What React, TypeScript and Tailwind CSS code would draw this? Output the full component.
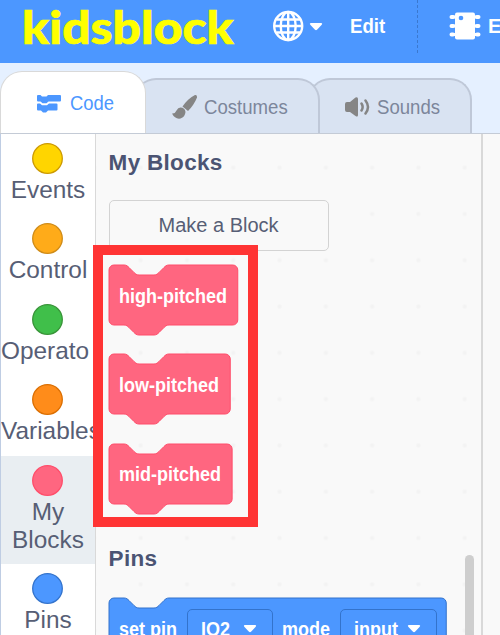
import type { ReactNode } from "react";

const categories = [
  { name: "Events", fill: "#ffd500", stroke: "#cc9900" },
  { name: "Control", fill: "#ffab19", stroke: "#cf8b17" },
  { name: "Operato", fill: "#40bf4a", stroke: "#389438", wide: true },
  { name: "Variables", fill: "#ff8c1a", stroke: "#db6e00" },
  { name: "My Blocks", fill: "#ff6680", stroke: "#ff4d6a", active: true },
  { name: "Pins", fill: "#4c97ff", stroke: "#3373cc" },
];

type CategoryProps = { name: string; fill: string; stroke: string; active?: boolean; wide?: boolean };

function Category({ name, fill, stroke, active, wide }: CategoryProps) {
  return (
    <div className={`flex flex-col items-center pt-[9px] pb-[10.6px] ${active ? "bg-[#e9eef2]" : ""}`}>
      <svg width="32" height="31" viewBox="0 0 32 31">
        <circle cx="15.500" cy="15.500" r="14.800" fill={fill} stroke={stroke} strokeWidth="1.300" />
      </svg>
      <div className={`mt-[2px] w-[94px] text-[24.4px] leading-[28px] text-[#575e75] ${wide ? "text-left" : "text-center"}`}>{name}</div>
    </div>
  );
}

function blockPath(w: number) {
  return `M0,4 A4,4 0 0,1 4,0 H12 c2,0 3,1 4,2 l4,4 c1,1 2,2 4,2 h12 c2,0 3,-1 4,-2 l4,-4 c1,-1 2,-2 4,-2 H${w - 4} a4,4 0 0,1 4,4 v40 a4,4 0 0,1 -4,4 H48 c-2,0 -3,1 -4,2 l-4,4 c-1,1 -2,2 -4,2 h-12 c-2,0 -3,-1 -4,-2 l-4,-4 c-1,-1 -2,-2 -4,-2 H4 a4,4 0 0,1 -4,-4 z`;
}

function Block({ units, fill, stroke, children }: { units: number; fill: string; stroke: string; children: ReactNode }) {
  return (
    <div className="relative h-[89.4px]" style={{ width: units * 1.25 }}>
      <svg className="absolute inset-0 overflow-visible" width={units * 1.25} height="71" viewBox={`0 0 ${units} 56.8`}>
        <path d={blockPath(units)} fill={fill} stroke={stroke} strokeWidth="0.8" />
      </svg>
      <div className="relative flex h-[61px] items-center pl-[10px] text-[20px] font-bold text-white">{children}</div>
    </div>
  );
}

function Label({ children }: { children: ReactNode }) {
  return <span className="inline-block origin-left scale-x-[0.9] whitespace-nowrap">{children}</span>;
}

function Caret() {
  return (
    <svg width="14" height="9" viewBox="0 0 14 9">
      <path d="M2 1H12Q14 1 12.5 3L8 7.8Q7 8.6 6 7.8L1.500 3Q0 1 2 1Z" fill="#fff" />
    </svg>
  );
}

function Dropdown({ label, className }: { label: string; className: string }) {
  return (
    <div className={`flex h-[40px] shrink-0 items-center justify-between rounded-[5px] border border-[#3373cc] ${className}`}>
      <Label>{label}</Label>
      <Caret />
    </div>
  );
}

export default function App() {
  return (
    <div className="flex h-[635px] w-[500px] flex-col overflow-hidden bg-[#e5f0ff] font-['Liberation_Sans',Arial,sans-serif]">
      <header className="flex h-[63px] shrink-0 items-start overflow-hidden bg-[#4c97ff]">
        <div className="h-full w-[273px] shrink-0 pl-[21.5px] font-[Lato,sans-serif] text-[46px] leading-[54px] font-black text-[#ffff00]">
          <span className="inline-block origin-left scale-x-[1.083] [-webkit-text-stroke:0.7px_#ffff00]">kidsblock</span>
        </div>
        <svg className="mt-[10px] shrink-0" width="32" height="32" viewBox="0 0 32 32" fill="none" stroke="#fff" strokeWidth="2.400">
          <circle cx="15.200" cy="16" r="14" />
          <ellipse cx="15.200" cy="16" rx="7.500" ry="14" />
          <path d="M15.200 2V30M1 16H29M3.500 9.500H27M3.500 22.500H27" />
        </svg>
        <div className="mt-[22px] ml-[4px] flex w-[41px] shrink-0">
          <Caret />
        </div>
        <div className="w-[67px] shrink-0 pt-[14px] text-[20px] leading-[24px] font-bold text-white">
          <span className="inline-block origin-left scale-x-[0.93]">Edit</span>
        </div>
        <div className="h-[53px] w-0 shrink-0 border-l border-dashed border-[#3a78cf]" />
        <svg className="mt-[11px] ml-[31px] shrink-0" width="32" height="30" viewBox="0 0 32 30">
          <rect x="6" y="1.500" width="20" height="27" rx="2" fill="#fff" />
          <path d="M2.500 6H4M2.500 15H4M2.500 23.500H4M28 6H29.500M28 15H29.500M28 23.500H29.500" stroke="#fff" strokeWidth="4" strokeLinecap="round" />
          <path d="M3 6H7M3 15H7M3 23.500H7M25 6H29M25 15H29M25 23.500H29" stroke="#fff" strokeWidth="3" />
          <circle cx="12" cy="7" r="2.300" fill="#4c97ff" />
        </svg>
        <div className="ml-[7px] pt-[14px] text-[20px] leading-[24px] font-bold text-white">E</div>
      </header>

      <nav className="flex h-[70px] shrink-0 items-end">
        <div className="relative z-20 flex h-[62px] w-[146px] shrink-0 items-center rounded-t-[22px] border border-b-0 border-[#d9d9d9] bg-white pl-[35px]">
          <svg className="mt-[3px]" width="27" height="20" viewBox="0 0 27 20" fill="#4c97ff">
            <path d="M1 2Q1 1 2 1H4.500L6 2.500H10.500L12 1H24Q25 1 25 2V6.500Q25 7.500 24 7.500H12.500L10.500 9.300H6.500L4.500 7.500H2Q1 7.500 1 6.500Z" />
            <path d="M1 10.500Q1 9.500 2 9.500H4L6 11.200H11L13 9.500H20.500Q21.500 9.500 21.500 10.500V15.500Q21.500 16.500 20.500 16.500H12L10 18.500H7L5 16.500H2Q1 16.500 1 15.500Z" />
          </svg>
          <span className="ml-[7px] text-[20px] leading-[24px] text-[#4c97ff]"><span className="inline-block origin-left scale-x-[0.92]">Code</span></span>
        </div>
        <div className="relative z-10 -ml-[12px] flex h-[55px] w-[186px] shrink-0 items-center rounded-t-[22px] border-2 border-b-0 border-[#bfc8d8] bg-[#d9e3f2] pl-[35px]">
          <svg width="27" height="27" viewBox="0 0 27 27" fill="#858585">
            <path d="M24 2Q26.500 1.500 26 4.500Q23 12 17 18L11.500 13.500Q17 5.500 24 2Z" />
            <path d="M9.500 14.500Q14 14.500 14.500 19Q14 24 9.500 25.500Q4 26.500 1 20.500Q4 21 5.500 17.500Q7 14.500 9.500 14.500Z" />
          </svg>
          <span className="ml-[6px] text-[20px] leading-[24px] text-[#7c869b]"><span className="inline-block origin-left scale-x-[0.93]">Costumes</span></span>
        </div>
        <div className="-ml-[12px] flex h-[55px] w-[164px] shrink-0 items-center rounded-t-[22px] border-2 border-b-0 border-[#bfc8d8] bg-[#d9e3f2] pl-[34px]">
          <svg width="27" height="22" viewBox="0 0 27 22" fill="#858585">
            <path d="M1 8Q1 6 3 6H6L11.500 1.500Q14 .5 14 3V19Q14 21.500 11.500 20L6 16H3Q1 16 1 14Z" />
            <path d="M17.500 7.500Q19.800 11 17.500 14.500M21.500 4.500Q26.500 11 21.500 17.500" fill="none" stroke="#858585" strokeWidth="2.500" strokeLinecap="round" />
          </svg>
          <span className="ml-[6px] text-[20px] leading-[24px] text-[#7c869b]"><span className="inline-block origin-left scale-x-[0.93]">Sounds</span></span>
        </div>
      </nav>

      <main className="relative flex min-h-0 flex-1 overflow-hidden border-t border-[#c4cbd6] bg-[#f9f9f9]">
        <aside className="-mt-[0.5px] w-[96px] shrink-0 overflow-hidden border-r border-l border-r-[#d9d9d9] border-l-[#bfcde3] bg-white">
          {categories.map((c) => (
            <Category key={c.name} {...c} />
          ))}
        </aside>
        <section className="w-[387px] shrink-0 overflow-hidden border-r-2 border-[#d9d9d9] bg-[radial-gradient(circle_at_center,#f3f3f3_0,#f3f3f3_1px,transparent_3px)] bg-[length:46.3px_46.3px] bg-[position:21.500px_10.500px] pl-[12.6px]">
          <h2 className="pt-[17px] text-[22.5px] leading-[24px] font-bold tracking-[0.3px] text-[#4b5473]">My Blocks</h2>
          <div className="mt-[25px] flex h-[51px] w-[220px] items-center justify-center rounded-[5px] border-[1.5px] border-[#d3d3d3] bg-[#f9f9f9] pb-[2px] text-[20px] text-[#575e75]">Make a Block</div>
          <div className="mt-[14px]">
            <Block units={103} fill="#ff6680" stroke="#ff4d6a"><Label>high-pitched</Label></Block>
            <Block units={97} fill="#ff6680" stroke="#ff4d6a"><Label>low-pitched</Label></Block>
            <Block units={98.5} fill="#ff6680" stroke="#ff4d6a"><Label>mid-pitched</Label></Block>
          </div>
          <h2 className="mt-[14px] text-[22.5px] leading-[24px] font-bold tracking-[0.3px] text-[#4b5473]">Pins</h2>
          <div className="mt-[27px]">
            <Block units={269.8} fill="#4c97ff" stroke="#3373cc">
              <span className="w-[68px] shrink-0"><Label>set pin</Label></span>
              <Dropdown label="IO2" className="w-[86px] pr-[15px] pl-[13px]" />
              <span className="w-[67px] shrink-0 pl-[9px]"><Label>mode</Label></span>
              <Dropdown label="input" className="w-[97px] pr-[15px] pl-[13px]" />
            </Block>
          </div>
        </section>
        <div className="absolute top-[421px] left-[464.500px] h-[100px] w-[9px] rounded-full bg-[#cecece]" />
        <div className="absolute top-[111px] left-[93px] h-[282px] w-[165px] border-[10px] border-[#ff3434]" />
      </main>
    </div>
  );
}
